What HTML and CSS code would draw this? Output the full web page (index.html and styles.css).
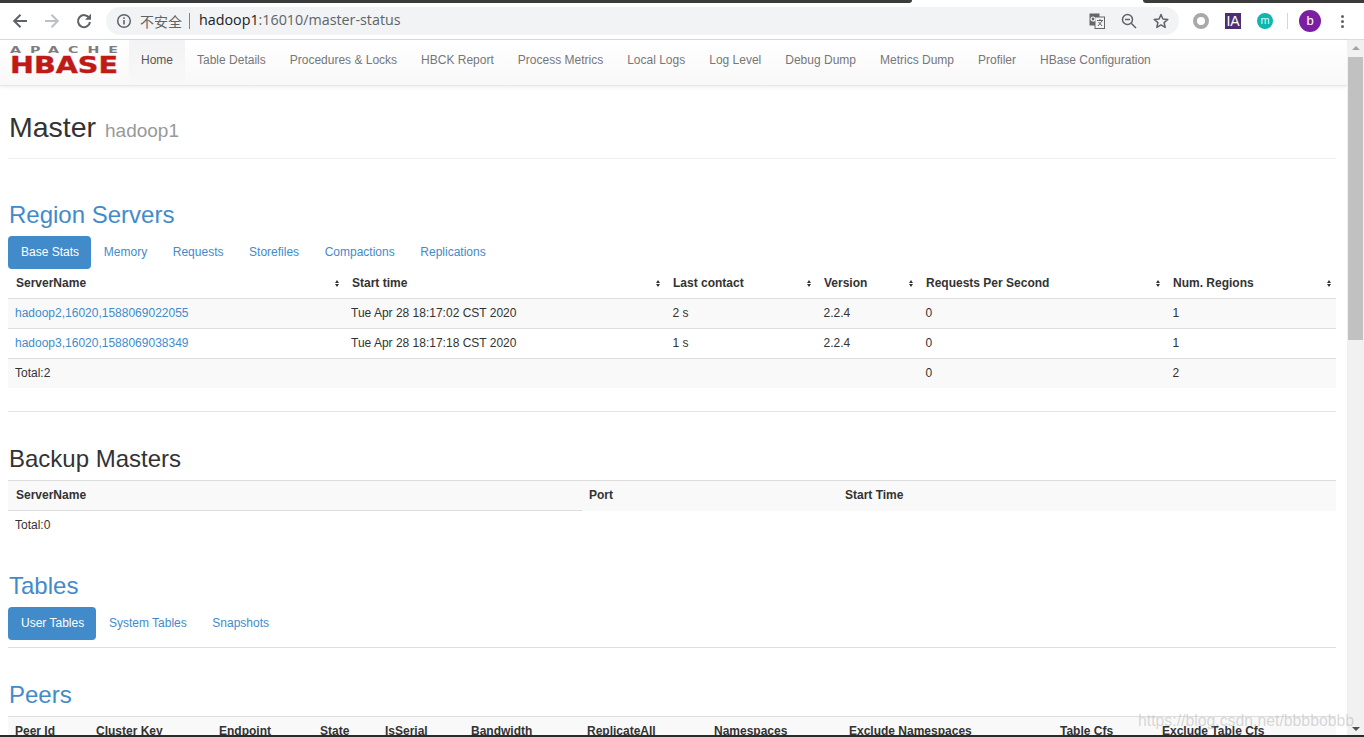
FILE: index.html
```html
<!DOCTYPE html>
<html>
  <head>
    <meta charset="utf-8">
    <title>Master: hadoop1</title>
    <link rel="stylesheet" href="styles.css">
  </head>

  <body>
    <div class="tabstrip">
      <div class="strip-left"></div>
      <div class="strip-tab"></div>
      <div class="strip-right"></div>
    </div>

    <div class="toolbar">
      <svg class="tool-ico back" width="16" height="16" viewBox="0 0 16 16"><path d="M15 8H2.5M8.5 1.7 2.2 8l6.3 6.3" fill="none" stroke="#5f6368" stroke-width="2"/></svg>
      <svg class="tool-ico forward" width="16" height="16" viewBox="0 0 16 16"><path d="M1 8h12.5M7.5 1.7 13.800 8l-6.300 6.300" fill="none" stroke="#bdc1c6" stroke-width="2"/></svg>
      <svg class="tool-ico reload" width="16" height="16" viewBox="0 0 16 16"><path d="M13.300 5.200A6 6 0 1 0 14 9" fill="none" stroke="#5f6368" stroke-width="2"/><path d="M15 0.800V6.800H9z" fill="#5f6368"/></svg>

      <div class="omnibox">
        <svg class="info" width="16" height="16" viewBox="0 0 16 16"><circle cx="8" cy="8" r="6.300" fill="none" stroke="#5f6368" stroke-width="1.500"/><rect x="7.200" y="7" width="1.600" height="4.500" fill="#5f6368"/><rect x="7.200" y="4.300" width="1.600" height="1.600" fill="#5f6368"/></svg>
        <span class="unsafe">不安全</span>
        <span class="sep"></span>
        <span class="url"><b>hadoop1</b>:16010/master-status</span>
        <span class="omni-right">
          <svg width="16" height="16" viewBox="0 0 16 16"><rect x="0.500" y="0.500" width="10" height="12" fill="#666"/><rect x="6" y="4" width="9.500" height="11.500" fill="#f1f3f4" stroke="#666"/><circle cx="4" cy="6" r="2" fill="none" stroke="#fff" stroke-width="1.200"/><path d="M8 7.500h6M11 6v1.500M9 13l4-5M9.500 9l3.500 4" fill="none" stroke="#666"/></svg>
          <svg width="16" height="16" viewBox="0 0 16 16"><circle cx="6.500" cy="6.500" r="5" fill="none" stroke="#5f6368" stroke-width="1.500"/><path d="M10.200 10.200 15 15" stroke="#5f6368" stroke-width="1.500"/><path d="M4 6.500h5" stroke="#5f6368" stroke-width="1.500"/></svg>
          <svg width="16" height="16" viewBox="0 0 16 16"><path d="M8 1.500 9.900 6 14.800 6.400 11.100 9.600 12.200 14.400 8 11.900 3.800 14.400 4.900 9.600 1.200 6.400 6.100 6z" fill="none" stroke="#5f6368" stroke-width="1.500" stroke-linejoin="round"/></svg>
        </span>
      </div>

      <div class="exts">
        <span class="ext-ring"></span>
        <span class="ext-ia">IA</span>
        <span class="ext-m">m</span>
        <span class="ext-sep"></span>
        <span class="avatar">b</span>
        <span class="menu-dots"><i></i><i></i><i></i></span>
      </div>
    </div>

    <div class="viewport">
      <div class="page">
        <nav class="navbar">
          <svg class="logo" width="108" height="30" viewBox="0 0 108 30">
            <text class="logo-apache" x="0" y="8" transform="scale(1.5 1)" textLength="72" lengthAdjust="spacing">APACHE</text>
            <text class="logo-hbase" x="0" y="28" textLength="108" lengthAdjust="spacingAndGlyphs">HBASE</text>
          </svg>
          <ul class="nav-links">
            <li class="active"><a href="#">Home</a></li>
            <li><a href="#">Table Details</a></li>
            <li><a href="#">Procedures &amp; Locks</a></li>
            <li><a href="#">HBCK Report</a></li>
            <li><a href="#">Process Metrics</a></li>
            <li><a href="#">Local Logs</a></li>
            <li><a href="#">Log Level</a></li>
            <li><a href="#">Debug Dump</a></li>
            <li><a href="#">Metrics Dump</a></li>
            <li><a href="#">Profiler</a></li>
            <li><a href="#">HBase Configuration</a></li>
          </ul>
        </nav>

        <div class="container">
          <div class="page-header">
            <h1>Master <small>hadoop1</small></h1>
          </div>

          <section class="region-servers">
            <h2><a href="#">Region Servers</a></h2>
            <ul class="pills">
              <li class="active"><a href="#">Base Stats</a></li>
              <li><a href="#">Memory</a></li>
              <li><a href="#">Requests</a></li>
              <li><a href="#">Storefiles</a></li>
              <li><a href="#">Compactions</a></li>
              <li><a href="#">Replications</a></li>
            </ul>
            <table class="table striped servers">
              <thead>
                <tr>
                  <th><div class="sort">ServerName<span class="sort-ico"></span></div></th>
                  <th><div class="sort">Start time<span class="sort-ico"></span></div></th>
                  <th><div class="sort">Last contact<span class="sort-ico"></span></div></th>
                  <th><div class="sort">Version<span class="sort-ico"></span></div></th>
                  <th><div class="sort">Requests Per Second<span class="sort-ico"></span></div></th>
                  <th><div class="sort">Num. Regions<span class="sort-ico"></span></div></th>
                </tr>
              </thead>
              <tbody>
                <tr>
                  <td><a href="#">hadoop2,16020,1588069022055</a></td>
                  <td>Tue Apr 28 18:17:02 CST 2020</td>
                  <td>2 s</td>
                  <td>2.2.4</td>
                  <td>0</td>
                  <td>1</td>
                </tr>
                <tr>
                  <td><a href="#">hadoop3,16020,1588069038349</a></td>
                  <td>Tue Apr 28 18:17:18 CST 2020</td>
                  <td>1 s</td>
                  <td>2.2.4</td>
                  <td>0</td>
                  <td>1</td>
                </tr>
                <tr>
                  <td>Total:2</td>
                  <td></td>
                  <td></td>
                  <td></td>
                  <td>0</td>
                  <td>2</td>
                </tr>
              </tbody>
            </table>
          </section>

          <hr class="rule">

          <section class="backup">
            <h2>Backup Masters</h2>
            <table class="table backup-table">
              <tr class="head-row">
                <th class="first">ServerName</th>
                <th>Port</th>
                <th>Start Time</th>
              </tr>
              <tr>
                <td>Total:0</td>
                <td></td>
                <td></td>
              </tr>
            </table>
          </section>

          <section class="tables">
            <h2><a href="#">Tables</a></h2>
            <ul class="pills underlined">
              <li class="active"><a href="#">User Tables</a></li>
              <li><a href="#">System Tables</a></li>
              <li><a href="#">Snapshots</a></li>
            </ul>
          </section>

          <section class="peers">
            <h2><a href="#">Peers</a></h2>
            <table class="table peers-table">
              <tr class="head-row">
                <th>Peer Id</th>
                <th>Cluster Key</th>
                <th>Endpoint</th>
                <th>State</th>
                <th>IsSerial</th>
                <th>Bandwidth</th>
                <th>ReplicateAll</th>
                <th>Namespaces</th>
                <th>Exclude Namespaces</th>
                <th>Table Cfs</th>
                <th>Exclude Table Cfs</th>
              </tr>
            </table>
          </section>
        </div>
      </div>

      <div class="scrollbar">
        <span class="arrow up"></span>
        <div class="track"><div class="thumb"></div></div>
        <span class="arrow down"></span>
      </div>
    </div>

    <div class="watermark">https://blog.csdn.net/bbbbobbb</div>
    <div class="bottom-edge"></div>
  </body>
</html>
```

FILE: styles.css
```css
html, body {
  margin: 0;
  padding: 0;
  height: 737px;
  overflow: hidden;
}

body {
  position: relative;
  background: #fff;
  font-family: "Liberation Sans", Arial, sans-serif;
  font-size: 12px;
  line-height: 1.42857;
  color: #333;
}

a {
  color: #428bca;
  text-decoration: none;
}

/* ----------------------------------- Browser frame */
.tabstrip {
  display: flex;
  height: 3px;
  background: #fff;
}

.strip-left {
  width: 912px;
  background: #3b3b3b;
  border-bottom-right-radius: 3px;
}

.strip-tab {
  width: 231px;
}

.strip-right {
  flex: 1;
  background: #3b3b3b;
  border-bottom-left-radius: 3px;
}

.toolbar {
  display: flex;
  align-items: center;
  height: 36px;
  border-bottom: 1px solid #dadce0;
  background: #fff;
  box-sizing: content-box;
}

.tool-ico {
  flex: none;
}

.back {
  margin-left: 12px;
}

.forward {
  margin-left: 16px;
}

.reload {
  margin-left: 16px;
}

.omnibox {
  display: flex;
  align-items: center;
  width: 1073px;
  height: 28px;
  margin-left: 14px;
  padding-left: 10px;
  box-sizing: border-box;
  border-radius: 14px;
  background: #f1f3f4;
  font-family: "Open Sans", sans-serif;
  font-size: 14.300px;
  color: #5f6368;
}

.unsafe {
  margin-left: 8px;
  margin-top: -1px;
  font-family: "Noto Sans CJK SC", sans-serif;
  font-size: 14px;
}

.sep {
  width: 1px;
  height: 16px;
  margin: 0 9px 0 7px;
  background: #80868b;
}

.url {
  margin-top: -1px;
}

.url b {
  font-weight: 400;
  color: #202124;
}

.omni-right {
  display: flex;
  gap: 16px;
  margin-left: auto;
  margin-right: 10px;
}

.exts {
  display: flex;
  align-items: center;
  flex: 1;
  padding-left: 14px;
}

.ext-ring {
  width: 16px;
  height: 16px;
  box-sizing: border-box;
  border: 4px solid #a9a9a9;
  border-radius: 50%;
}

.ext-ia {
  width: 16px;
  height: 16px;
  margin-left: 16px;
  background: #4b2f73;
  color: #fff;
  font-size: 14px;
  line-height: 16px;
  text-align: center;
}

.ext-m {
  width: 16px;
  height: 16px;
  margin-left: 16px;
  border-radius: 50%;
  background: #0fb5ae;
  color: #d5fff5;
  font-size: 11px;
  line-height: 14px;
  text-align: center;
}

.ext-sep {
  width: 1px;
  height: 16px;
  margin-left: 14px;
  background: #d5d7da;
}

.avatar {
  width: 22px;
  height: 22px;
  margin-left: 11px;
  border-radius: 50%;
  background: #7b1fa2;
  color: #fff;
  font-size: 13px;
  line-height: 22px;
  text-align: center;
}

.menu-dots {
  display: flex;
  flex-direction: column;
  gap: 2px;
  margin-left: 20px;
}

.menu-dots i {
  width: 3px;
  height: 3px;
  border-radius: 50%;
  background: #5f6368;
}

/* ----------------------------------- Page + scrollbar */
.viewport {
  display: flex;
  height: 697px;
}

.page {
  flex: 1;
  min-width: 0;
}

.scrollbar {
  display: flex;
  flex-direction: column;
  align-items: center;
  width: 17px;
  background: #f1f1f1;
}

.arrow {
  flex: none;
  width: 0;
  height: 0;
  margin: 6px 0;
  border-left: 4px solid transparent;
  border-right: 4px solid transparent;
}

.arrow.up {
  border-bottom: 4px solid #a3a3a3;
}

.arrow.down {
  border-top: 4px solid #505050;
}

.track {
  flex: 1;
  width: 100%;
  padding: 1px 1px 0;
  box-sizing: border-box;
}

.thumb {
  height: 283px;
  background: #c1c1c1;
}

/* ----------------------------------- Navbar */
.navbar {
  display: flex;
  height: 45px;
  padding-left: 10px;
  background: linear-gradient(to bottom, #fff 0%, #f8f8f8 100%);
  border-bottom: 1px solid #e7e7e7;
  box-shadow: 0 1px 4px rgba(0, 0, 0, .08);
}

.logo {
  flex: none;
  margin-top: 5px;
  overflow: visible;
}

.logo-apache {
  font-family: "DejaVu Sans", sans-serif;
  font-size: 9.500px;
  font-weight: 700;
  fill: #7d7d7d;
}

.logo-hbase {
  font-family: "DejaVu Sans", sans-serif;
  font-size: 23px;
  font-weight: 700;
  fill: #c01a17;
  stroke: #c01a17;
  stroke-width: .4px;
}

.nav-links {
  display: flex;
  margin: 0 0 0 11px;
  padding: 0;
  list-style: none;
}

.nav-links a {
  display: block;
  padding: 12px;
  line-height: 17px;
  color: #777;
}

.nav-links .active a {
  color: #555;
  background: linear-gradient(to bottom, #f3f3f3 0%, #f8f8f8 100%);
  height: 45px;
  box-sizing: border-box;
}

/* ----------------------------------- Content */
.container {
  padding: 0 11px 0 8px;
}

.page-header {
  height: 72px;
  border-bottom: 1px solid #eee;
}

h1 {
  margin: 0 0 0 1px;
  padding-top: 23px;
  font-size: 28.500px;
  font-weight: 500;
  line-height: 36px;
}

h1 small {
  margin-left: 1px;
  font-size: 19px;
  font-weight: 400;
  color: #999;
}

h2 {
  margin: 0 0 0 1px;
  font-size: 24px;
  font-weight: 500;
  line-height: 26px;
}

.region-servers {
  padding-top: 43px;
}

.pills {
  display: flex;
  margin: 8px 0 0;
  padding: 0;
  list-style: none;
}

.pills a {
  display: block;
  height: 33px;
  padding: 0 12.800px;
  box-sizing: border-box;
  line-height: 32px;
}

.pills .active a {
  padding: 0 12px 0 13px;
  border-radius: 4px;
  background: #428bca;
  color: #fff;
}

.pills.underlined {
  padding-bottom: 7px;
  border-bottom: 1px solid #ddd;
}

/* ----------------------------------- Tables */
.table {
  width: 100%;
  border-collapse: collapse;
  table-layout: fixed;
}

.table th {
  padding: 0 8px;
  height: 29px;
  font-weight: 700;
  text-align: left;
  vertical-align: middle;
}

.table td {
  padding: 0 7px;
  height: 29px;
  vertical-align: middle;
}

.servers th {
  border-bottom: 1px solid #ddd;
}

.servers td {
  border-bottom: 1px solid #ddd;
}

.servers tbody tr:last-child td {
  border-bottom: none;
}

.servers th:nth-child(1) { width: 320px; }
.servers th:nth-child(2) { width: 305px; }
.servers th:nth-child(3) { width: 135px; }
.servers th:nth-child(4) { width: 86px; }
.servers th:nth-child(5) { width: 231px; }

.servers td:nth-child(n+3) {
  padding-left: 7.500px;
}

.striped tbody tr:nth-child(odd) td {
  background: #f9f9f9;
}

.sort {
  display: flex;
  align-items: center;
  justify-content: space-between;
}

.sort-ico {
  display: flex;
  flex-direction: column;
  gap: 1px;
  margin-right: -3px;
}

.sort-ico::before,
.sort-ico::after {
  content: "";
  width: 0;
  height: 0;
  border-left: 2.500px solid transparent;
  border-right: 2.500px solid transparent;
}

.sort-ico::before {
  border-bottom: 3.500px solid #333;
}

.sort-ico::after {
  border-top: 3.500px solid #333;
}

.rule {
  height: 1px;
  margin: 23px 0 0;
  border: 0;
  background: #e4e4e4;
}

.backup {
  padding-top: 34px;
}

.backup-table {
  margin-top: 8px;
}

.head-row th {
  background: #f9f9f9;
  border-top: 1px solid #ddd;
}

.backup-table .first {
  width: 558px;
  border-bottom: 1px solid #ddd;
}

.backup-table th:nth-child(2) {
  width: 241px;
  padding-right: 8px;
  padding-left: 7px;
}

.backup-table th:nth-child(3) {
  padding-left: 7px;
}

.backup-table td {
  height: 29px;
}

.tables {
  padding-top: 33px;
}

.peers {
  padding-top: 34px;
}

.peers-table {
  margin-top: 8px;
}

.peers-table th:nth-child(1) { width: 65px; padding-left: 7px; }
.peers-table th:nth-child(2) { width: 107px; }
.peers-table th:nth-child(3) { width: 85px; }
.peers-table th:nth-child(4) { width: 49px; }
.peers-table th:nth-child(5) { width: 70px; }
.peers-table th:nth-child(6) { width: 100px; }
.peers-table th:nth-child(7) { width: 111px; }
.peers-table th:nth-child(8) { width: 119px; }
.peers-table th:nth-child(9) { width: 195px; }
.peers-table th:nth-child(10) { width: 86px; }

/* ----------------------------------- Overlays */
.watermark {
  position: absolute;
  left: 1138px;
  top: 710px;
  font-size: 15.800px;
  color: rgba(170, 170, 170, .45);
  white-space: nowrap;
}

.bottom-edge {
  position: absolute;
  left: 0;
  right: 0;
  bottom: 0;
  height: 2px;
  background: #2a2a2a;
}
```
